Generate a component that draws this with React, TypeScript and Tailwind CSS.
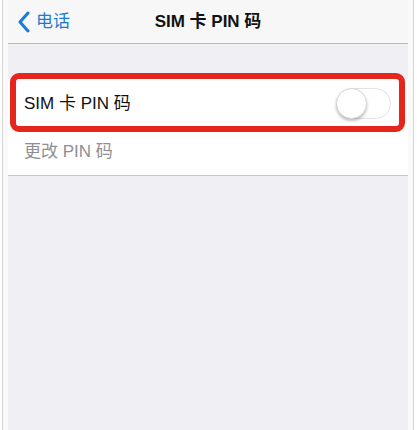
const font = { fontFamily: '"Liberation Sans", "Noto Sans CJK SC", sans-serif' };

function Toggle() {
  return (
    <div className="relative h-[31px] w-[55px] rounded-full border border-[#e3e3e3] bg-white">
      <div className="absolute left-[-1px] top-[-1px] h-[31px] w-[31px] rounded-full border border-[#d8d8d8] bg-white shadow-[0_2px_3px_rgba(0,0,0,0.25)]" />
    </div>
  );
}

export default function App() {
  return (
    <div
      className="flex h-[430px] w-[417px] overflow-hidden bg-white"
      style={font}
    >
      <div className="ml-[2px] w-[1px] bg-[#d6d6d6]" />
      <div className="w-[5px] bg-[#fafafa]" />

      <div className="flex w-[400px] flex-col bg-[#efeff4]">
        <header className="relative flex h-[44px] items-center justify-center border-b border-[#b8b8b8] bg-[#f7f7f7]">
          <div className="absolute left-[9px] top-0 flex h-full items-center gap-[5px] text-[#1a7bd6]">
            <svg width="14" height="22" viewBox="0 0 14 22" fill="none">
              <path
                d="M11 2 L3 11 L11 20"
                stroke="currentColor"
                strokeWidth="3"
                strokeLinecap="round"
                strokeLinejoin="round"
              />
            </svg>
            <span className="text-[17px] leading-none">电话</span>
          </div>
          <h1 className="text-[17px] font-semibold leading-none text-[#111]">
            SIM 卡 PIN 码
          </h1>
        </header>

        <div className="mt-[35px] bg-white">
          <div className="relative flex h-[49px] items-center justify-between pl-[16px] pr-[17px]">
            <span className="text-[17px] text-[#111]">SIM 卡 PIN 码</span>
            <Toggle />
            <div className="absolute bottom-[-4px] left-[2px] right-[3px] top-[-6px] rounded-[9px] border-[6px] border-[#e5261c]" />
          </div>
          <div className="flex h-[48px] items-center border-b border-[#c8c7cc] pl-[16px]">
            <span className="text-[17px] text-[#8e8e93]">更改 PIN 码</span>
          </div>
        </div>
      </div>

      <div className="w-[5px] bg-[#fafafa]" />
      <div className="w-[1px] bg-[#d6d6d6]" />
    </div>
  );
}
